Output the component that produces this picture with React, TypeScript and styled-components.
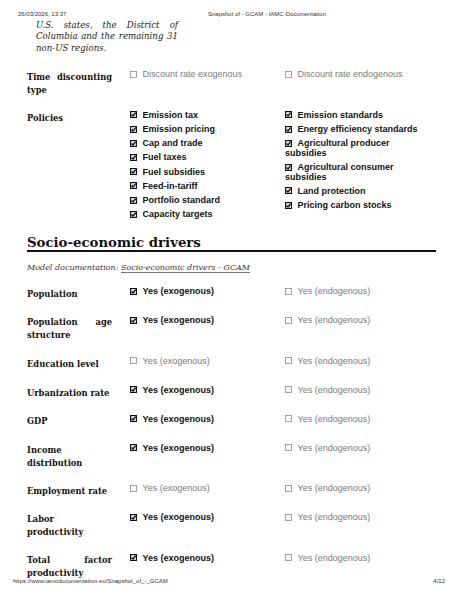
import React from "react";
import styled, { createGlobalStyle } from "styled-components";

const Global = createGlobalStyle`
  html, body { margin: 0; padding: 0; background: #fff; }
  body { width: 463px; height: 599px; overflow: hidden; }
`;

const Page = styled.div`
  position: relative;
  width: 463px;
  height: 599px;
  display: flex;
  flex-direction: column;
  box-sizing: border-box;
`;

const PrintBar = styled.div`
  display: flex;
  align-items: center;
  height: 8px;
  font-family: "Liberation Sans", Arial, sans-serif;
  font-size: 6px;
  color: #333;
  white-space: nowrap;
`;

const TopBar = styled(PrintBar)`
  padding: 10px 0 0 18px;
`;

const TopDate = styled.span`
  width: 190px;
`;

const BottomBar = styled(PrintBar)`
  position: absolute;
  left: 13px;
  right: 18px;
  top: 577px;
  justify-content: space-between;
`;

const Content = styled.div`
  padding: 0 27px;
  display: flex;
  flex-direction: column;
`;

const Intro = styled.p`
  margin: 2px 0 0 9px;
  width: 142px;
  font-family: "DejaVu Serif", Georgia, serif;
  font-style: italic;
  font-size: 8.6px;
  line-height: 11.3px;
  text-align: justify;
  color: #222;
`;

const Row = styled.div<{ $top?: number; $bottom?: number; $center?: boolean }>`
  display: grid;
  grid-template-columns: 85px 137px 140px;
  column-gap: 18px;
  align-items: start;
  padding-top: ${(p) => p.$top ?? 8}px;
  padding-bottom: ${(p) => p.$bottom ?? 8.5}px;
  & > :first-child {
    align-self: ${(p) => (p.$center ? "center" : "start")};
  }
`;

const Label = styled.div<{ $lh?: number; $pb?: number }>`
  font-family: "DejaVu Serif", Georgia, serif;
  font-weight: bold;
  font-size: 8.3px;
  line-height: ${(p) => p.$lh ?? 12.5}px;
  padding-bottom: ${(p) => p.$pb ?? 0}px;
  color: #111;
  text-align: justify;
`;

const Options = styled.div<{ $reserve?: number; $shift?: number }>`
  display: flex;
  flex-direction: column;
  gap: 4.6px;
  margin-top: ${(p) => p.$shift ?? 0}px;
  padding-bottom: ${(p) => p.$reserve ?? 0}px;
`;

const Option = styled.div<{ $on: boolean }>`
  font-family: "Liberation Sans", Arial, sans-serif;
  font-size: 9px;
  line-height: 9.6px;
  font-weight: ${(p) => (p.$on ? "bold" : "normal")};
  color: ${(p) => (p.$on ? "#111" : "#7a7a7a")};
`;

const Box = styled.svg`
  display: inline-block;
  width: 7px;
  height: 7px;
  margin-right: 5.5px;
  vertical-align: -0.5px;
`;

const Heading = styled.h2`
  margin: 7.5px 0 0 0;
  font-family: "DejaVu Serif", Georgia, serif;
  font-weight: bold;
  font-size: 13.3px;
  line-height: 14px;
  color: #111;
  border-bottom: 2px solid #111;
`;

const DocLine = styled.p`
  margin: 11px 0 8px 0;
  font-family: "DejaVu Serif", Georgia, serif;
  font-style: italic;
  font-size: 8px;
  line-height: 10px;
  color: #333;
`;

const DocLink = styled.a`
  color: #333;
  text-decoration: underline;
  text-decoration-color: #777;
  text-underline-offset: 1.5px;
`;

function Check({ on }: { on: boolean }) {
  return on ? (
    <Box viewBox="0 0 7 7">
      <rect x="0.55" y="0.55" width="5.9" height="5.9" fill="#e6e6e6" stroke="#111" strokeWidth="1.1" />
      <path d="M1.5 3.5 L3 5 L5.7 1.6" fill="none" stroke="#111" strokeWidth="1.4" />
    </Box>
  ) : (
    <Box viewBox="0 0 7 7">
      <rect x="0.5" y="0.5" width="6" height="6" fill="#fff" stroke="#8a8a8a" strokeWidth="0.8" />
    </Box>
  );
}

type Opt = [string, boolean];

function OptionList({ items, reserve, shift }: { items: Opt[]; reserve?: number; shift?: number }) {
  return (
    <Options $reserve={reserve} $shift={shift}>
      {items.map(([t, on]) => (
        <Option key={t} $on={on}>
          <Check on={on} />
          {t}
        </Option>
      ))}
    </Options>
  );
}

const socio: [string, boolean][] = [
  ["Population", true],
  ["Population age structure", true],
  ["Education level", false],
  ["Urbanization rate", true],
  ["GDP", true],
  ["Income distribution", true],
  ["Employment rate", false],
  ["Labor productivity", true],
  ["Total factor productivity", true],
];

export default function App() {
  return (
    <Page>
      <Global />
      <TopBar>
        <TopDate>26/03/2026, 13:37</TopDate>
        <span>Snapshot of - GCAM - IAMC-Documentation</span>
      </TopBar>
      <Content>
        <Intro>
          U.S. states, the District of Columbia and the remaining 31 non-US regions.
        </Intro>
        <Row $top={17.5} $bottom={7.5}>
          <Label>Time discounting type</Label>
          <OptionList items={[["Discount rate exogenous", false]]} shift={-1} />
          <OptionList items={[["Discount rate endogenous", false]]} shift={-1} />
        </Row>
        <Row>
          <Label>Policies</Label>
          <OptionList
            shift={-1}
            items={[
              ["Emission tax", true],
              ["Emission pricing", true],
              ["Cap and trade", true],
              ["Fuel taxes", true],
              ["Fuel subsidies", true],
              ["Feed-in-tariff", true],
              ["Portfolio standard", true],
              ["Capacity targets", true],
            ]}
          />
          <OptionList
            shift={-1}
            items={[
              ["Emission standards", true],
              ["Energy efficiency standards", true],
              ["Agricultural producer subsidies", true],
              ["Agricultural consumer subsidies", true],
              ["Land protection", true],
              ["Pricing carbon stocks", true],
            ]}
          />
        </Row>
        <Heading>Socio-economic drivers</Heading>
        <DocLine>
          Model documentation: <DocLink>Socio-economic drivers - GCAM</DocLink>
        </DocLine>
        {socio.map(([label, exo]) => (
          <Row key={label} $top={6.5} $bottom={6.5} $center>
            <Label $lh={13} $pb={1.5}>{label}</Label>
            <OptionList items={[["Yes (exogenous)", exo]]} reserve={6.4} />
            <OptionList items={[["Yes (endogenous)", false]]} reserve={6.4} />
          </Row>
        ))}
      </Content>
      <BottomBar>
        <span>https://www.iamcdocumentation.eu/Snapshot_of_-_GCAM</span>
        <span>4/12</span>
      </BottomBar>
    </Page>
  );
}
